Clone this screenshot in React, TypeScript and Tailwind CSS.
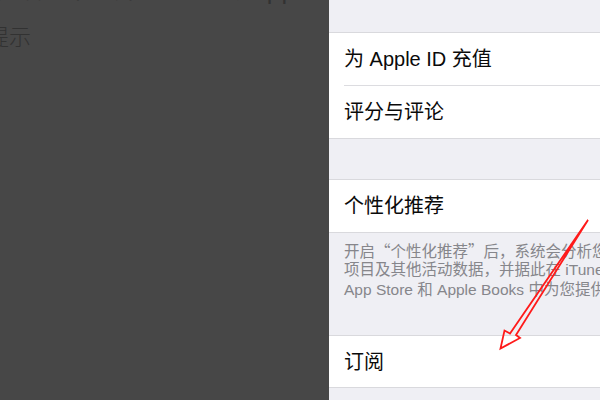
import React from 'react';

const latin = { fontFamily: '"Liberation Sans", "Noto Sans CJK SC", sans-serif' };
const cjk = { fontFamily: '"Noto Sans CJK SC", "Liberation Sans", sans-serif' };

const Cell: React.FC<{ label: string; h: string }> = ({ label, h }) => (
  <div className={`${h} flex items-center pl-[15px] bg-white`}>
    <span className="text-[20px] text-[#0a0a0a] whitespace-nowrap">{label}</span>
  </div>
);

const DimmedPage: React.FC = () => (
  <div className="w-[329px] shrink-0 bg-[#474747] overflow-hidden" style={cjk}>
    <div className="-mt-[26px] -ml-[6px] whitespace-nowrap text-[24px] leading-[28px] text-[#323232]">
      在设置中打开 iTunes 与 App Store 页面
    </div>
    <div className="mt-[22px] -ml-[13px] whitespace-nowrap text-[22px] leading-[22px] font-light text-[#323232]">
      提示
    </div>
  </div>
);

const SettingsList: React.FC = () => (
  <div className="flex-1 bg-[#efeff4] overflow-hidden flex flex-col" style={latin}>
    <div className="h-[33px] shrink-0 border-b border-[#d9d9dd]" />

    <Cell label="为 Apple ID 充值" h="h-[52px]" />
    <div className="bg-white pl-[15px]">
      <div className="h-px bg-[#dcdce0]" />
    </div>
    <Cell label="评分与评论" h="h-[52px]" />
    <div className="h-px shrink-0 bg-[#d9d9dd]" />

    <div className="h-[41px] shrink-0 border-b border-[#d9d9dd]" />

    <Cell label="个性化推荐" h="h-[52px]" />
    <div className="h-px shrink-0 bg-[#d9d9dd]" />

    <div className="h-[102px] shrink-0 pt-[7px] pl-[15px] text-[15.5px] leading-[20px] text-[#86868b] whitespace-nowrap">
      <div style={cjk}>开启“个性化推荐”后，系统会分析您的下载和购买</div>
      <div>项目及其他活动数据，并据此在 iTunes Store、</div>
      <div>App Store 和 Apple Books 中为您提供个性化推荐。</div>
    </div>

    <div className="h-px shrink-0 bg-[#d9d9dd]" />
    <Cell label="订阅" h="h-[51px]" />
    <div className="h-px shrink-0 bg-[#d9d9dd]" />
    <div className="flex-1" />
  </div>
);

const Arrow: React.FC = () => (
  <svg className="absolute inset-0 pointer-events-none" width="600" height="400" viewBox="0 0 600 400">
    <polygon
      points="588,220 516,335 520,338 500.5,348.5 504.5,330.5 510,333.5"
      fill="none"
      stroke="#ff1a1a"
      strokeWidth="1.8"
      strokeLinejoin="miter"
    />
  </svg>
);

export default function App() {
  return (
    <div className="relative w-[600px] h-[400px] flex overflow-hidden">
      <DimmedPage />
      <SettingsList />
      <Arrow />
    </div>
  );
}
